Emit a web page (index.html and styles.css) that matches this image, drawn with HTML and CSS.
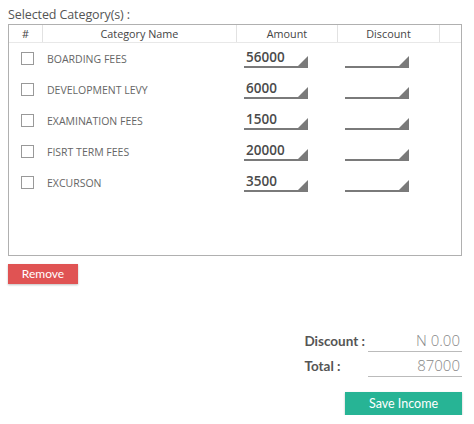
FILE: index.html
```html
<!DOCTYPE html>
<html>
<head>
<meta charset="utf-8">
<link rel="stylesheet" href="styles.css">
</head>
<body>
<div class="page">
  <div class="title">Selected Category(s) :</div>
  <div class="box">
    <div class="grid head">
      <div class="hc">#</div>
      <div class="hc">Category Name</div>
      <div class="hc">Amount</div>
      <div class="hc">Discount</div>
      <div class="hc last"></div>
    </div>
    <div class="grid row">
      <div class="cb-cell"><span class="cb"></span></div>
      <div class="name">BOARDING FEES</div>
      <div class="cell"><div class="inp">56000</div></div>
      <div class="cell"><div class="inp"></div></div>
      <div></div>
    </div>
    <div class="grid row">
      <div class="cb-cell"><span class="cb"></span></div>
      <div class="name">DEVELOPMENT LEVY</div>
      <div class="cell"><div class="inp">6000</div></div>
      <div class="cell"><div class="inp"></div></div>
      <div></div>
    </div>
    <div class="grid row">
      <div class="cb-cell"><span class="cb"></span></div>
      <div class="name">EXAMINATION FEES</div>
      <div class="cell"><div class="inp">1500</div></div>
      <div class="cell"><div class="inp"></div></div>
      <div></div>
    </div>
    <div class="grid row">
      <div class="cb-cell"><span class="cb"></span></div>
      <div class="name">FISRT TERM FEES</div>
      <div class="cell"><div class="inp">20000</div></div>
      <div class="cell"><div class="inp"></div></div>
      <div></div>
    </div>
    <div class="grid row">
      <div class="cb-cell"><span class="cb"></span></div>
      <div class="name">EXCURSON</div>
      <div class="cell"><div class="inp">3500</div></div>
      <div class="cell"><div class="inp"></div></div>
      <div></div>
    </div>
  </div>
  <button class="btn remove">Remove</button>
  <div class="totals">
    <div class="tl">Discount :</div>
    <div class="tv">N 0.00</div>
    <div class="tl">Total :</div>
    <div class="tv">87000</div>
  </div>
  <div class="save-row">
    <button class="btn save">Save Income</button>
  </div>
</div>
</body>
</html>
```
FILE: styles.css
```css
* { box-sizing: border-box; }
body { margin: 0; background: #fff; font-family: "Open Sans", "Noto Sans", sans-serif; }
.page { width: 462px; padding: 7px 0 0 8px; }
.title { font-size: 12.5px; color: #555; line-height: 16px; height: 17px; letter-spacing: -0.1px; }
.box { border: 1px solid #b0b0b0; height: 232px; width: 454px; }
.grid { display: grid; grid-template-columns: 34px 194px 101px 102px 1fr; }
.head { height: 18px; border-bottom: 1px solid #e8e8e8; }
.hc { font-size: 10.8px; color: #444; text-align: center; line-height: 17px; border-right: 1px solid #e2e2e2; }
.hc.last { border-right: none; }
.row { height: 31px; align-items: center; }
.cb-cell { padding-left: 12px; display: flex; }
.cb { width: 13px; height: 13px; border: 1px solid #999; background: #fff; display: block; }
.name { font-size: 10.5px; color: #666; padding-left: 4px; }
.cell { padding-left: 7px; }
.inp { position: relative; width: 64px; height: 19px; border-bottom: 2px solid #7a7a7a; font-size: 13.5px; font-weight: 600; color: #4a4a4a; line-height: 17px; padding-left: 2px; }
.inp::after { content: ""; position: absolute; right: 0; bottom: 0; width: 0; height: 0; border-left: 10px solid transparent; border-bottom: 10px solid #7a7a7a; }
.btn { border: none; color: #fff; font-family: Lato, sans-serif; font-size: 12px; display: block; cursor: pointer; box-shadow: 0 1px 2px rgba(0,0,0,0.25); }
.remove { margin-top: 8px; width: 70px; height: 20px; background: #e05353; padding: 0; line-height: 20px; }
.totals { margin-top: 46px; display: grid; grid-template-columns: auto 94px; column-gap: 3px; row-gap: 3px; justify-content: end; align-items: end; }
.tl { font-family: Lato, sans-serif; font-weight: bold; font-size: 13.5px; color: #555; padding-bottom: 3px; }
.tv { border-bottom: 1px solid #bbb; font-family: "Open Sans", sans-serif; font-size: 15px; color: #888; text-align: right; height: 22px; line-height: 20px; padding-right: 2px; font-weight: 300; }
.save-row { display: flex; justify-content: flex-end; margin-top: 15px; }
.save { width: 117px; height: 23px; background: #27b495; font-size: 12.5px; padding: 0; }
```
